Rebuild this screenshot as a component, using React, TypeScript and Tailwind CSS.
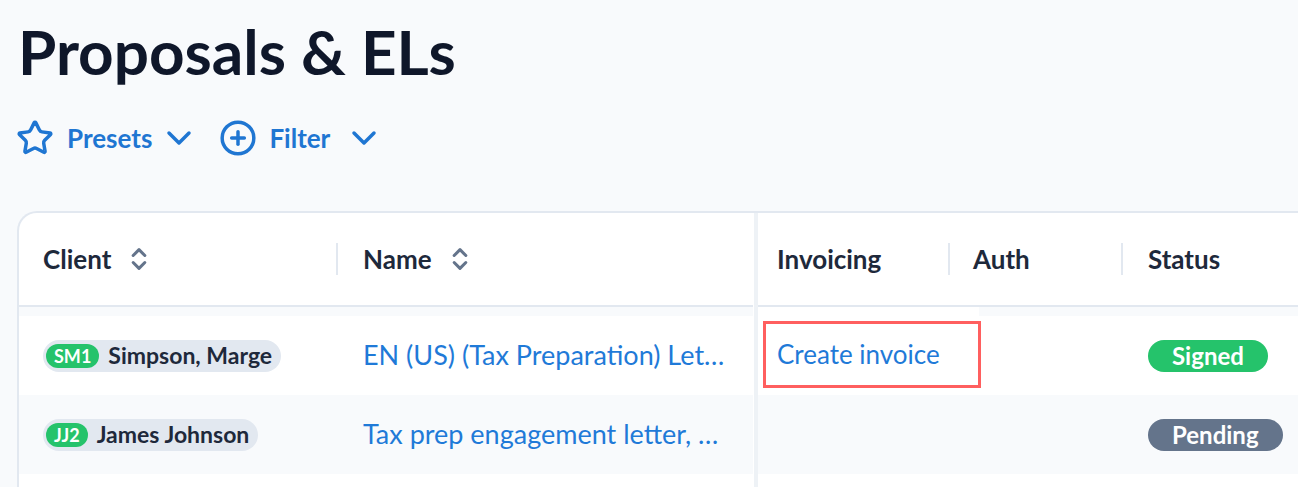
import { Star, CirclePlus, ChevronDown, ChevronsUpDown } from "lucide-react";

const Divider = () => <div className="w-[2px] h-8 bg-[#e2e8f0] shrink-0" />;

const SortIcon = () => (
  <ChevronsUpDown size={28} strokeWidth={2.6} className="text-[#64748b] ml-[14px]" />
);

const ClientChip = ({ code, name }: { code: string; name: string }) => (
  <div className="inline-flex items-center h-8 rounded-full bg-[#e2e8f0] pl-[3px] pr-[9px]">
    <span className="h-6 px-[8px] rounded-full bg-[#25c36b] text-white text-[18px] font-bold leading-6 flex items-center">
      {code}
    </span>
    <span className="ml-[9px] text-[23px] font-bold text-[#1e293b] leading-none">{name}</span>
  </div>
);

const StatusBadge = ({ label, tone }: { label: string; tone: "green" | "gray" }) => (
  <span
    className={
      "inline-flex items-center h-8 px-[24px] rounded-full text-white text-[24px] font-bold leading-none " +
      (tone === "green" ? "bg-[#25c36b]" : "bg-[#64748b]")
    }
  >
    {label}
  </span>
);

export default function App() {
  return (
    <div className="w-full h-[487px] overflow-hidden bg-[#f8fafc] font-['Lato',sans-serif] pl-[17px]">
      <h1 className="pt-[14px] text-[62px] leading-[74px] font-bold text-[#0f172a] ml-[1px]">
        Proposals &amp; ELs
      </h1>

      <div className="mt-[30px] h-10 flex items-center text-[#1f76d2]">
        <button className="flex items-center">
          <Star size={38} strokeWidth={2.2} className="-ml-[1px]" />
          <span className="ml-[13px] text-[26px] font-bold">Presets</span>
          <ChevronDown size={40} strokeWidth={2.1} className="ml-[7px]" />
        </button>
        <button className="flex items-center ml-[20px]">
          <CirclePlus size={38} strokeWidth={2.2} />
          <span className="ml-[12px] text-[26px] font-bold">Filter</span>
          <ChevronDown size={40} strokeWidth={2.1} className="ml-[14px]" />
        </button>
      </div>

      <div className="mt-[53px] w-[1400px] flex bg-white border-t-2 border-l-2 border-[#e2e8f0] rounded-tl-[20px]">
        {/* sticky left part */}
        <div className="w-[734px] shrink-0">
          <div className="h-[94px] flex items-center border-b-2 border-[#e2e8f0] text-[26px] font-bold text-[#1e293b]">
            <div className="w-[317px] pl-[24px] flex items-center">
              Client
              <SortIcon />
            </div>
            <Divider />
            <div className="pl-[25px] flex items-center">
              Name
              <SortIcon />
            </div>
          </div>
          <div className="h-[9px] bg-[#f8fafc]" />
          <div className="h-[79px] flex items-center bg-white">
            <div className="w-[319px] pl-[24px]">
              <ClientChip code="SM1" name="Simpson, Marge" />
            </div>
            <div className="pl-[25px] text-[27px] text-[#1f7ad8] whitespace-nowrap">
              EN (US) (Tax Preparation) Let…
            </div>
          </div>
          <div className="h-[79px] flex items-center bg-[#f8fafc]">
            <div className="w-[319px] pl-[24px]">
              <ClientChip code="JJ2" name="James Johnson" />
            </div>
            <div className="pl-[25px] text-[27px] text-[#1f7ad8] whitespace-nowrap">
              Tax prep engagement letter, …
            </div>
          </div>
          <div className="h-[20px] bg-white" />
        </div>

        {/* sticky edge */}
        <div className="w-[5px] shrink-0 bg-[#eef2f6] border-l border-white" />

        {/* scrolling part */}
        <div className="flex-1">
          <div className="h-[94px] flex items-center border-b-2 border-[#e2e8f0] text-[26px] font-bold text-[#1e293b]">
            <div className="w-[190px] pl-[19px]">Invoicing</div>
            <Divider />
            <div className="w-[171px] pl-[23px]">Auth</div>
            <Divider />
            <div className="pl-[25px]">Status</div>
          </div>
          <div className="h-[9px] flex">
            <div className="w-[221px] bg-white" />
            <div className="flex-1 bg-[#f8fafc]" />
          </div>
          <div className="h-[79px] flex items-center bg-white">
            <div className="w-[363px] h-full flex items-start">
              <div className="ml-[5px] mt-[5px] w-[218px] h-[67px] border-[3px] border-[#ff5f5f] flex items-center pl-[11px] text-[26px] text-[#1f7ad8]">
                Create invoice
              </div>
            </div>
            <div className="pl-[27px]">
              <StatusBadge label="Signed" tone="green" />
            </div>
          </div>
          <div className="h-[79px] flex items-center bg-[#f8fafc]">
            <div className="w-[363px]" />
            <div className="pl-[27px]">
              <StatusBadge label="Pending" tone="gray" />
            </div>
          </div>
        </div>
      </div>
    </div>
  );
}
